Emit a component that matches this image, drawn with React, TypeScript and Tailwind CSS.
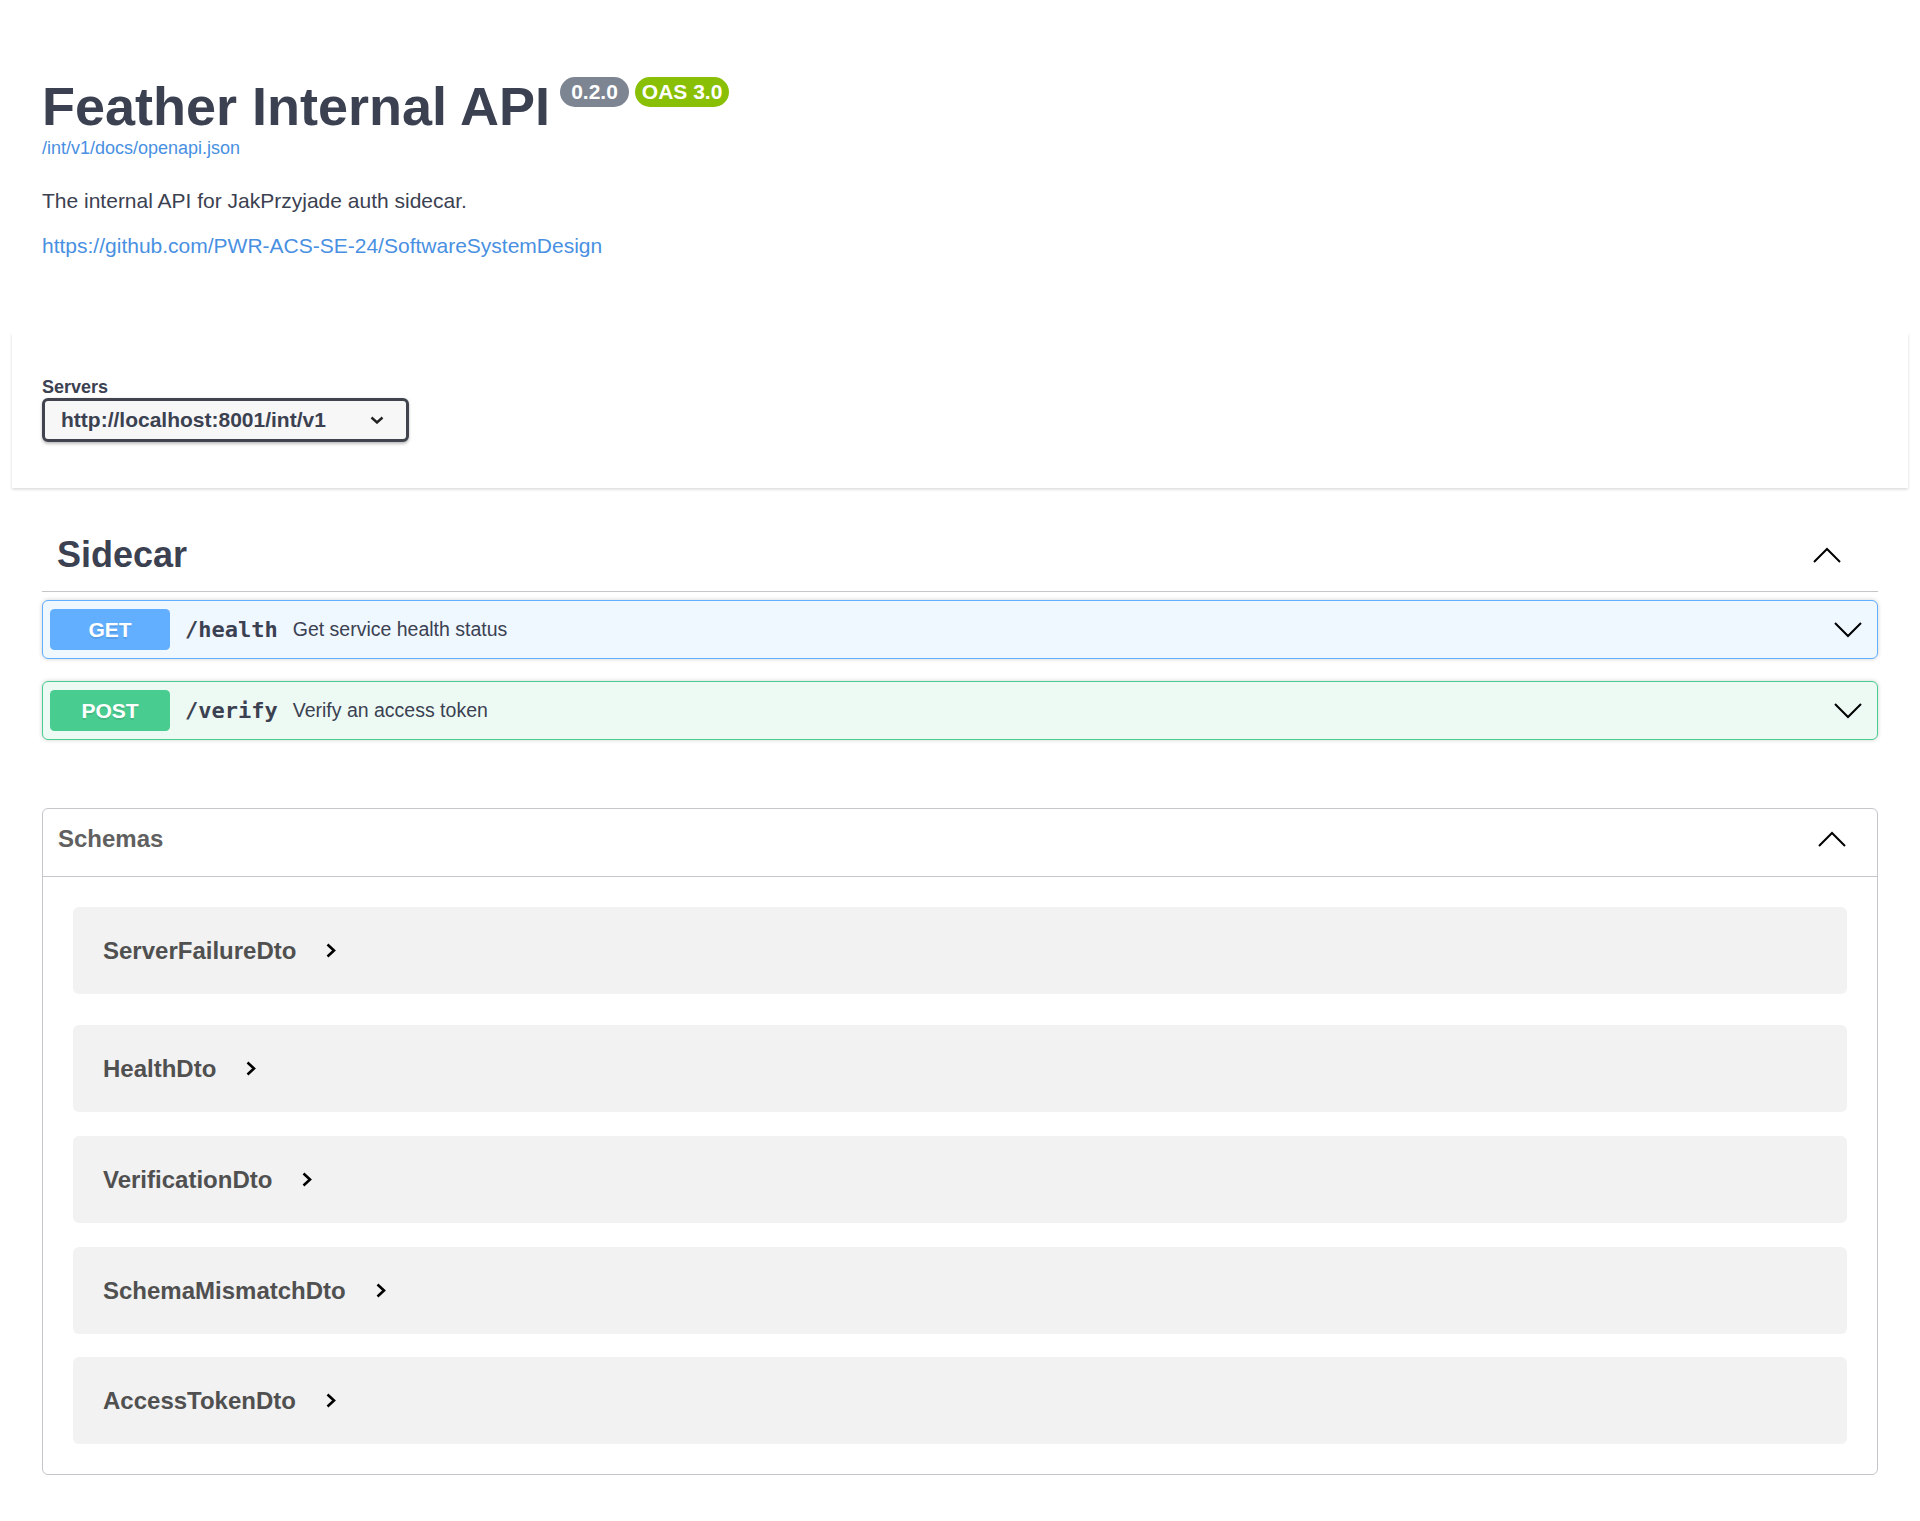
import React from 'react';

const ops = [
  { method: 'GET', path: '/health', summary: 'Get service health status', badge: 'bg-[#61affe]', box: 'border-[#61affe] bg-[#eff7ff]' },
  { method: 'POST', path: '/verify', summary: 'Verify an access token', badge: 'bg-[#49cc90]', box: 'border-[#49cc90] bg-[#edfaf4]' },
];

const schemas = ['ServerFailureDto', 'HealthDto', 'VerificationDto', 'SchemaMismatchDto', 'AccessTokenDto'];
const rowGaps = ['mb-[31px]', 'mb-[24px]', 'mb-[24px]', 'mb-[23px]', ''];

function ChevronUp() {
  return (
    <svg width="28" height="16" viewBox="0 0 28 16" fill="none">
      <polyline points="1,15 14,2 27,15" stroke="#000" strokeWidth="2" />
    </svg>
  );
}

function ChevronDown() {
  return (
    <svg width="28" height="16" viewBox="0 0 28 16" fill="none">
      <polyline points="1,1 14,14 27,1" stroke="#000" strokeWidth="2" />
    </svg>
  );
}

function ChevronRight() {
  return (
    <svg width="10" height="15" viewBox="0 0 10 15" fill="none">
      <polyline points="1.5,1.5 8,7.5 1.5,13.5" stroke="#000" strokeWidth="2.6" />
    </svg>
  );
}

export default function App() {
  return (
    <div className="min-h-screen bg-white pb-[46px] font-['Liberation_Sans',Arial,sans-serif] text-[#3b4151]">
      {/* Info */}
      <div className="px-[42px] pt-[75px]">
        <div className="flex items-start">
          <h2 className="text-[54px] font-bold leading-[62px]">Feather Internal API</h2>
          <div className="ml-[10px] mt-[2px] flex gap-[6px]">
            <span className="flex h-[30px] items-center rounded-full bg-[#7d8492] px-[11px] text-[21px] font-bold text-white">0.2.0</span>
            <span className="flex h-[30px] items-center rounded-full bg-[#89bf04] px-[7px] text-[21px] font-bold text-white">OAS 3.0</span>
          </div>
        </div>
        <a className="block text-[18px] leading-[22px] text-[#4990e2]">/int/v1/docs/openapi.json</a>
        <p className="mt-[30px] text-[21px] leading-[24px]">The internal API for JakPrzyjade auth sidecar.</p>
        <a className="mt-[21px] block text-[21px] leading-[24px] text-[#4990e2]">https://github.com/PWR-ACS-SE-24/SoftwareSystemDesign</a>
      </div>

      {/* Servers */}
      <div className="mx-[12px] mt-[74px] bg-white px-[30px] pb-[46px] pt-[45px] shadow-[0_1.5px_3px_0_rgba(0,0,0,0.15)]">
        <div className="text-[18px] font-bold leading-[21px]">Servers</div>
        <div className="flex h-[44px] w-[367px] items-center justify-between rounded-[6px] border-[3px] border-[#41444e] bg-[#f7f7f7] pl-[16px] pr-[22px] shadow-[0_1.5px_3px_0_rgba(0,0,0,0.25)]">
          <span className="text-[21px] font-bold">http://localhost:8001/int/v1</span>
          <svg width="14" height="8" viewBox="0 0 14 8" fill="none">
            <polyline points="1.5,1.5 7,6.5 12.5,1.5" stroke="#222" strokeWidth="2.4" />
          </svg>
        </div>
      </div>

      <div className="px-[42px]">
        {/* Sidecar tag */}
        <div className="mt-[30px]">
          <div className="flex h-[74px] items-center justify-between border-b border-[rgba(59,65,81,0.3)] pl-[15px] pr-[37px]">
            <h3 className="text-[36px] font-bold">Sidecar</h3>
            <ChevronUp />
          </div>
          <div className="mt-[8px] flex flex-col gap-[22px]">
            {ops.map((op) => (
              <div key={op.path} className={`flex h-[59px] items-center rounded-[6px] border pl-[7px] pr-[15px] shadow-[0_0_4.5px_rgba(0,0,0,0.19)] ${op.box}`}>
                <span className={`flex h-[41px] w-[120px] items-center justify-center rounded-[4.5px] text-[21px] font-bold text-white [text-shadow:0_1.5px_0_rgba(0,0,0,0.1)] ${op.badge}`}>
                  {op.method}
                </span>
                <span className="px-[15px] font-['DejaVu_Sans_Mono',monospace] text-[22px] font-bold">{op.path}</span>
                <span className="flex-1 text-[19.5px]">{op.summary}</span>
                <ChevronDown />
              </div>
            ))}
          </div>
        </div>

        {/* Schemas */}
        <div className="mt-[68px] rounded-[6px] border border-[rgba(59,65,81,0.3)]">
          <div className="flex h-[68px] items-center justify-between border-b border-[rgba(59,65,81,0.3)] pb-[8px] pl-[15px] pr-[31px]">
            <h4 className="text-[24px] font-bold text-[#606060]">Schemas</h4>
            <ChevronUp />
          </div>
          <div className="px-[30px] pb-[30px] pt-[30px]">
            {schemas.map((name, i) => (
              <div key={name} className={`flex h-[87px] items-center gap-[30px] rounded-[6px] bg-[#f2f2f2] pl-[30px] ${rowGaps[i]}`}>
                <span className="text-[24px] font-bold text-[#505050]">{name}</span>
                <ChevronRight />
              </div>
            ))}
          </div>
        </div>
      </div>
    </div>
  );
}
